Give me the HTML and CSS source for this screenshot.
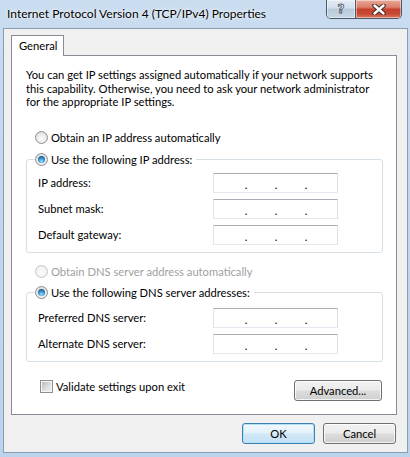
FILE: index.html
```html
<!DOCTYPE html>
<html lang="en">
<head>
<meta charset="utf-8">
<title>Internet Protocol Version 4 (TCP/IPv4) Properties</title>
<link rel="stylesheet" href="styles.css">
</head>
<body>
<div class="window">
  <div class="titlebar">
    <div class="title">Internet Protocol Version 4 (TCP/IPv4) Properties</div>
    <div class="caption-buttons">
      <div class="cap-btn help"><span class="help-glyph">?</span></div>
      <div class="cap-btn close">
        <svg width="14" height="11" viewBox="0 0 14 11" aria-hidden="true">
          <path d="M2.5 1.5 L11.5 9.5 M11.5 1.5 L2.5 9.5" stroke="#3b2a28" stroke-width="4.4" stroke-linecap="round"/>
          <path d="M2.5 1.5 L11.5 9.5 M11.5 1.5 L2.5 9.5" stroke="#ffffff" stroke-width="2.4" stroke-linecap="round"/>
        </svg>
      </div>
    </div>
  </div>
  <div class="client">
    <div class="tabs"><div class="tab">General</div></div>
    <div class="panel">
      <p class="intro">You can get IP settings assigned automatically if your network supports<br>this capability. Otherwise, you need to ask your network administrator<br>for the appropriate IP settings.</p>

      <div class="option first"><span class="radio"></span><span>Obtain an IP address automatically</span></div>

      <fieldset class="group">
        <legend class="option"><span class="radio checked"></span><span>Use the following IP address:</span></legend>
        <div class="field-row"><span class="label">IP address:</span><span class="ip"><span class="oct"></span><span class="dot">.</span><span class="oct"></span><span class="dot">.</span><span class="oct"></span><span class="dot">.</span><span class="oct"></span></span></div>
        <div class="field-row"><span class="label">Subnet mask:</span><span class="ip"><span class="oct"></span><span class="dot">.</span><span class="oct"></span><span class="dot">.</span><span class="oct"></span><span class="dot">.</span><span class="oct"></span></span></div>
        <div class="field-row"><span class="label">Default gateway:</span><span class="ip"><span class="oct"></span><span class="dot">.</span><span class="oct"></span><span class="dot">.</span><span class="oct"></span><span class="dot">.</span><span class="oct"></span></span></div>
      </fieldset>

      <div class="option disabled"><span class="radio"></span><span>Obtain DNS server address automatically</span></div>

      <fieldset class="group dns">
        <legend class="option"><span class="radio checked"></span><span>Use the following DNS server addresses:</span></legend>
        <div class="field-row"><span class="label">Preferred DNS server:</span><span class="ip"><span class="oct"></span><span class="dot">.</span><span class="oct"></span><span class="dot">.</span><span class="oct"></span><span class="dot">.</span><span class="oct"></span></span></div>
        <div class="field-row"><span class="label">Alternate DNS server:</span><span class="ip"><span class="oct"></span><span class="dot">.</span><span class="oct"></span><span class="dot">.</span><span class="oct"></span><span class="dot">.</span><span class="oct"></span></span></div>
      </fieldset>

      <div class="footer-row">
        <div class="check-row"><span class="checkbox"></span><span>Validate settings upon exit</span></div>
        <button class="btn advanced" type="button">Advanced...</button>
      </div>
    </div>
    <div class="dialog-buttons">
      <button class="btn default" type="button">OK</button>
      <button class="btn" type="button">Cancel</button>
    </div>
  </div>
</div>
</body>
</html>
```

FILE: styles.css
```css
html, body {
  margin: 0;
  padding: 0;
}

body {
  width: 410px;
  height: 457px;
  overflow: hidden;
  font-family: "Lato", "Noto Sans", sans-serif;
  font-size: 11.2px;
  color: #000;
  background: linear-gradient(180deg, #c9dcf0 0%, #c2d7ee 40%, #bcd3ec 100%);
}

.window {
  box-sizing: border-box;
  height: 457px;
  padding: 0 2px 4px 3px;
  display: flex;
  flex-direction: column;
}

/* ---------- title bar ---------- */
.titlebar {
  height: 28px;
  flex: none;
  display: flex;
  align-items: flex-start;
}

.title {
  margin: 6px 0 0 4px;
  font-size: 12px;
  line-height: 16px;
  white-space: nowrap;
  text-shadow: 0 0 6px rgba(255, 255, 255, 0.95), 0 0 2px rgba(255, 255, 255, 0.9);
}

.caption-buttons {
  margin-left: auto;
  margin-right: 6px;
  display: flex;
  height: 18px;
  border: 1px solid #4a5868;
  border-top: none;
  border-radius: 0 0 5px 5px;
  overflow: hidden;
}

.cap-btn {
  height: 18px;
  display: flex;
  align-items: center;
  justify-content: center;
  box-shadow: inset 0 0 0 1px rgba(255, 255, 255, 0.45);
}

.help {
  width: 28px;
  border-right: 1px solid #4a5868;
  background: linear-gradient(180deg, #e3ebf4 0%, #d2dfec 45%, #b9cadb 52%, #c7d6e5 100%);
}

.help-glyph {
  font-family: "DejaVu Sans", sans-serif;
  font-weight: bold;
  font-size: 12px;
  line-height: 12px;
  color: #eef2f6;
  -webkit-text-stroke: 0.8px #4b5563;
}

.close {
  width: 45px;
  background: linear-gradient(180deg, #eaa999 0%, #dc7c69 40%, #c5412e 52%, #c84a35 78%, #dd7a60 100%);
}

/* ---------- client area ---------- */
.client {
  flex: 1;
  display: flex;
  flex-direction: column;
  border: 1px solid #8a9cb0;
  background: #f0f0f0;
  padding: 6px 10px 8px 7px;
}

.tabs {
  display: flex;
  flex: none;
}

.tab {
  position: relative;
  z-index: 1;
  box-sizing: border-box;
  width: 53px;
  height: 21px;
  margin-bottom: -1px;
  padding-left: 7px;
  line-height: 19px;
  background: #fff;
  border: 1px solid #898c95;
  border-bottom: none;
}

.panel {
  flex: 1;
  display: flex;
  flex-direction: column;
  background: #fff;
  border: 1px solid #898c95;
  padding: 0 13px 0 14px;
}

.intro {
  margin: 12px 0 0;
  line-height: 13.5px;
  white-space: nowrap;
}

/* ---------- radios / options ---------- */
.option {
  display: flex;
  align-items: center;
  gap: 3px;
  height: 16px;
  white-space: nowrap;
}

.option.first {
  margin: 21px 0 0 9px;
}

.option.disabled {
  margin: 11px 0 0 9px;
  color: #a0a0a0;
}

.radio {
  box-sizing: border-box;
  width: 13px;
  height: 13px;
  flex: none;
  border-radius: 50%;
  border: 1px solid #8d9298;
  background: radial-gradient(circle at 50% 60%, #fbfbfb 0%, #ececec 45%, #cfd1d3 100%);
  display: flex;
  align-items: center;
  justify-content: center;
}

.radio.checked::after {
  content: "";
  width: 7px;
  height: 7px;
  border-radius: 50%;
  background: radial-gradient(circle at 50% 75%, #9fe0ff 0%, #4aa2dc 35%, #1d5f93 75%, #17496f 100%);
}

.option.disabled .radio {
  border-color: #c4c7ca;
  background: radial-gradient(circle at 50% 60%, #fbfbfb 0%, #f2f2f2 60%, #e3e4e5 100%);
}

/* ---------- group boxes ---------- */
.group {
  margin: 6px 0 0;
  padding: 5px 0 7px;
  min-width: 0;
  border: 1px solid #d5dfe5;
  border-radius: 3px;
}

.group.dns {
  margin-top: 5px;
  padding-top: 7px;
}

.group legend {
  margin-left: 8px;
  padding: 0 4px 0 0;
}

.field-row {
  display: flex;
  align-items: center;
  height: 20px;
  margin-left: 11px;
}

.field-row + .field-row {
  margin-top: 6px;
}

.label {
  width: 175px;
  flex: none;
  white-space: nowrap;
}

.ip {
  box-sizing: border-box;
  width: 125px;
  height: 20px;
  display: flex;
  padding: 3px 0 0 4px;
  line-height: 15px;
  background: #fff;
  border: 1px solid;
  border-color: #abadb3 #dbdfe6 #e3e9ef #e2e3ea;
}

.oct {
  width: 26px;
}

.dot {
  width: 4px;
  text-align: center;
}

/* ---------- footer ---------- */
.footer-row {
  display: flex;
  align-items: flex-start;
  margin-top: 18px;
}

.check-row {
  display: flex;
  align-items: center;
  gap: 3px;
  height: 13px;
  margin-left: 14px;
  white-space: nowrap;
}

.checkbox {
  box-sizing: border-box;
  width: 13px;
  height: 13px;
  flex: none;
  border: 1px solid #8e8f8f;
  padding: 1px;
  background: linear-gradient(135deg, #b7bbc0 0%, #dcdedf 55%, #f0f0f0 100%) content-box, #f6f6f6;
}

.btn {
  box-sizing: border-box;
  height: 21px;
  padding: 0;
  font: inherit;
  color: #000;
  border: 1px solid #707070;
  border-radius: 3px;
  background: linear-gradient(180deg, #f2f2f2 0%, #ebebeb 48%, #dddddd 52%, #cfcfcf 100%);
  box-shadow: inset 0 0 0 1px rgba(255, 255, 255, 0.75);
}

.btn.advanced {
  width: 88px;
  margin-left: auto;
  margin-right: 1px;
}

.dialog-buttons {
  flex: none;
  display: flex;
  justify-content: flex-end;
  gap: 8px;
  margin: 8px 1px 0 0;
}

.dialog-buttons .btn {
  width: 73px;
}

.btn.default {
  border-color: #3c7fb1;
  background: linear-gradient(180deg, #f0f8fd 0%, #e2f1fb 48%, #d0e8f7 52%, #c3e1f4 100%);
  box-shadow: inset 0 0 0 1px #b3e2f8;
}
```
